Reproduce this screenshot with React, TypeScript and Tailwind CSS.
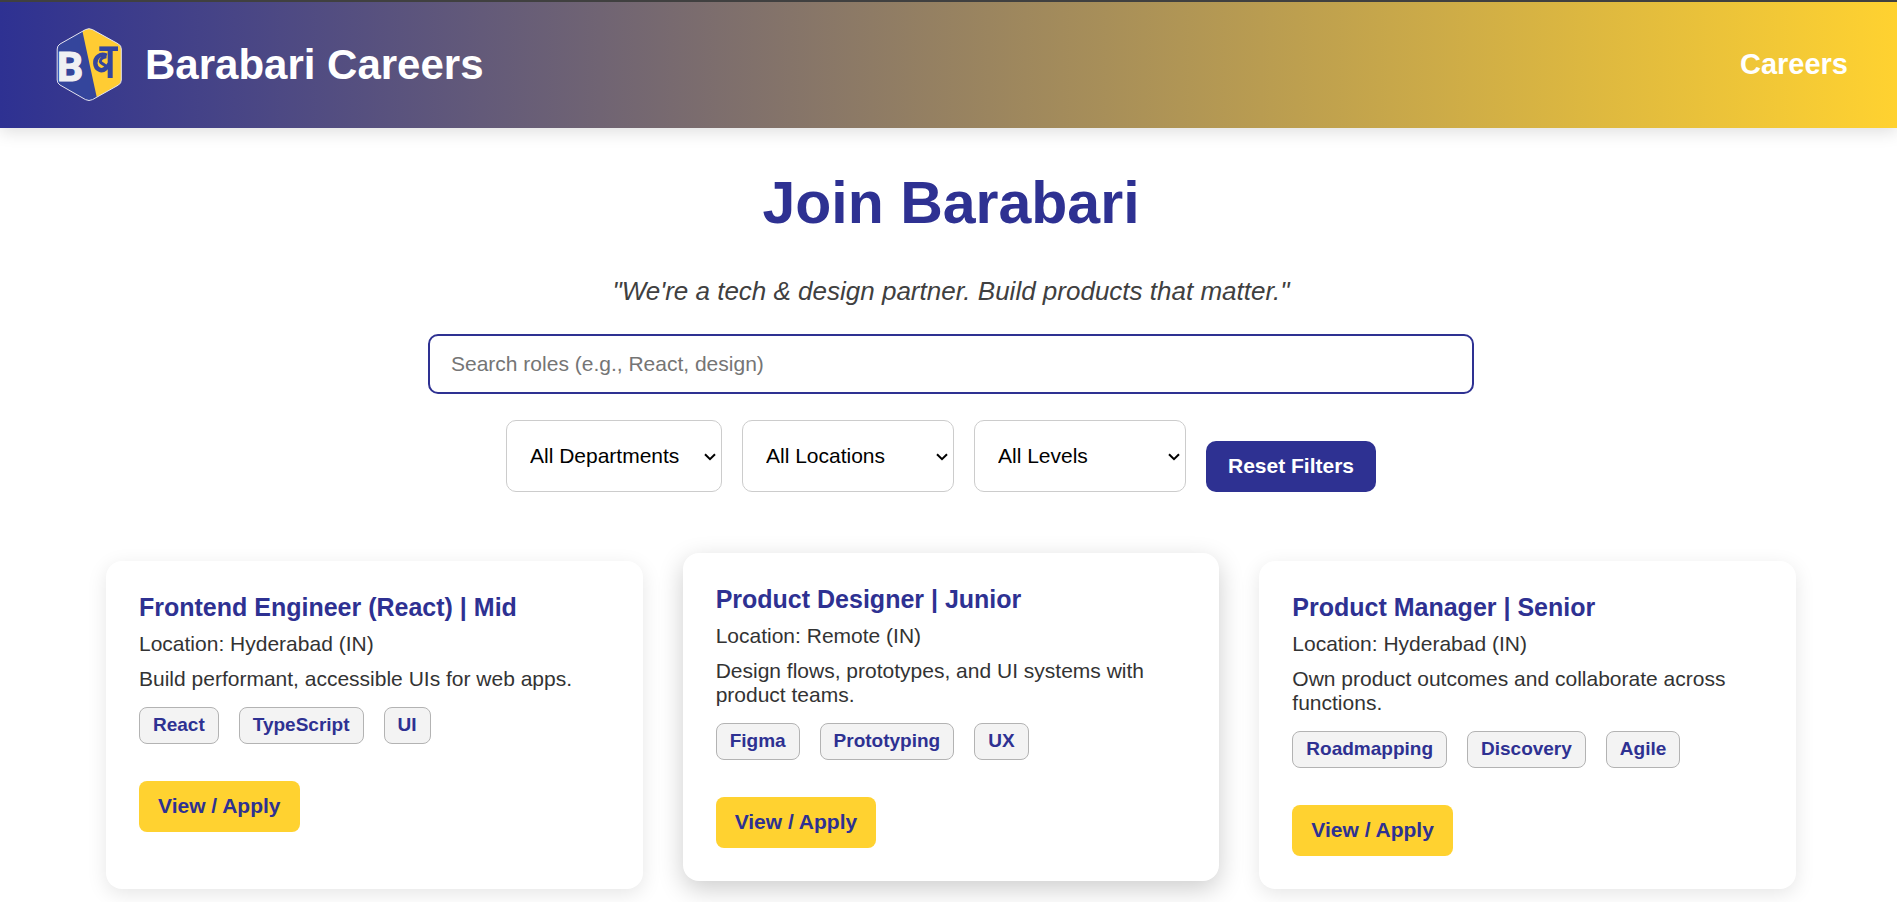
import React from "react";

type Job = {
  title: string;
  level: string;
  location: string;
  summary: string;
  tags: string[];
  raised?: boolean;
};

const jobs: Job[] = [
  {
    title: "Frontend Engineer (React)",
    level: "Mid",
    location: "Hyderabad (IN)",
    summary: "Build performant, accessible UIs for web apps.",
    tags: ["React", "TypeScript", "UI"],
  },
  {
    title: "Product Designer",
    level: "Junior",
    location: "Remote (IN)",
    summary: "Design flows, prototypes, and UI systems with product teams.",
    tags: ["Figma", "Prototyping", "UX"],
    raised: true,
  },
  {
    title: "Product Manager",
    level: "Senior",
    location: "Hyderabad (IN)",
    summary: "Own product outcomes and collaborate across functions.",
    tags: ["Roadmapping", "Discovery", "Agile"],
  },
];

const filters = [
  {
    label: "Department",
    all: "All Departments",
    options: ["Engineering", "Design", "Product"],
    width: "w-[216px]",
  },
  { label: "Location", all: "All Locations", options: ["Hyderabad", "Remote"], width: "w-[212px]" },
  { label: "Level", all: "All Levels", options: ["Junior", "Mid", "Senior"], width: "w-[212px]" },
];

const hexagon =
  "M45.5 14.6 Q49 12.8 52.5 14.6 L78.5 29 Q81.3 30.7 81.3 34 L81.3 65 Q81.3 68.2 78.5 70 L52.5 84.6 Q49 86.4 45.5 84.6 L20 70 Q17.2 68.2 17.2 65 L17.2 34 Q17.2 30.7 20 29 Z";

function Logo() {
  return (
    <svg viewBox="16 12 67 75" className="h-[75px] w-[67px]" role="img" aria-label="Barabari">
      <clipPath id="logo-hexagon">
        <path d={hexagon} />
      </clipPath>
      <g clipPath="url(#logo-hexagon)">
        <rect x="16" y="12" width="67" height="76" fill="#34459c" />
        <path d="M41.5 12 L58 88 L84 88 L84 12 Z" fill="#ffcc33" />
      </g>
      <path d={hexagon} fill="none" stroke="#e4e4f0" strokeWidth="1" />
      <text
        x="17"
        y="66"
        fontSize="41"
        fontWeight="700"
        fontFamily="Roboto, Arial, sans-serif"
        fill="#f0f0f3"
        stroke="#f0f0f3"
        strokeWidth="1.2"
      >
        B
      </text>
      <g fill="none" stroke="#34459c">
        <path d="M59.3 33.7 H78" strokeWidth="4.6" />
        <path d="M70.2 34 V63" strokeWidth="5" />
        <path
          d="M66.500 40.800 C60.500 37.500 54.800 42.500 55.300 48.500 C55.800 54.500 61.500 57 65.500 53.500 C67.500 52 68.500 50.500 69.500 49"
          strokeWidth="4.4"
        />
        <path d="M66.5 41.8 C63 42 60 44.300 60.300 46.500 C61 49 64 48.500 66 51.500" strokeWidth="3" />
      </g>
    </svg>
  );
}

function JobCard({ job }: { job: Job }) {
  return (
    <article
      className={
        job.raised
          ? "flex min-h-[328px] -translate-y-2 flex-col items-start rounded-2xl bg-white px-[33px] pt-8 pb-[33px] shadow-[0_8px_26px_rgba(0,0,0,0.2)]"
          : "flex min-h-[328px] flex-col items-start rounded-2xl bg-white px-[33px] pt-8 pb-[33px] shadow-[0_5px_20px_rgba(0,0,0,0.1)]"
      }
    >
      <h2 className="text-[25px] leading-7 font-bold text-[#2e3192]">
        {job.title} | {job.level}
      </h2>
      <p className="mt-[11px] text-[21px] leading-6 text-[#333]">Location: {job.location}</p>
      <p className="mt-[11px] text-[21px] leading-6 text-[#333]">{job.summary}</p>
      <ul className="mt-4 flex flex-wrap gap-5">
        {job.tags.map((tag) => (
          <li
            key={tag}
            className="rounded-lg border border-[#b3b3b3] bg-[#f3f3f3] px-[13px] pt-1.5 pb-2 text-[19px] leading-[21px] font-bold text-[#2e3192]"
          >
            {tag}
          </li>
        ))}
      </ul>
      <a
        href="#apply"
        className="mt-[37px] rounded-lg bg-[#ffd230] px-[19px] pt-3 pb-3.5 text-[21px] leading-[25px] font-bold text-[#2e3192]"
      >
        View / Apply
      </a>
    </article>
  );
}

export default function App() {
  return (
    <div className="bg-white font-['Liberation_Sans',Arial,sans-serif]">
      <header className="flex items-center justify-between border-t-2 border-[#404040] bg-linear-to-r/srgb from-[#2e3192] to-[#ffd230] pr-[49px] pl-14 shadow-[0_4px_16px_rgba(0,0,0,0.13)]">
        <div className="flex items-center gap-[22px] pt-[25px] pb-[26px]">
          <Logo />
          <span className="text-[42px] leading-[48px] font-bold text-white">Barabari Careers</span>
        </div>
        <nav className="pb-0.5">
          <a href="#careers" className="text-[29px] leading-8 font-bold text-white">
            Careers
          </a>
        </nav>
      </header>

      <main className="flex flex-col items-center pt-[41px] pr-[101px] pb-8 pl-[106px]">
        <h1 className="text-[59px] leading-[68px] font-bold text-[#2e3192]">Join Barabari</h1>
        <p className="mt-[39px] text-[26px] leading-[30px] text-[#404040] italic">
          "We're a tech &amp; design partner. Build products that matter."
        </p>

        <input
          type="search"
          aria-label="Search roles"
          placeholder="Search roles (e.g., React, design)"
          className="mt-7 h-[60px] w-full max-w-[1046px] rounded-[10px] border-2 border-[#2e3192] bg-white px-[21px] text-[21px] text-black outline-none placeholder:text-[#757575]"
        />

        <div className="mt-[26px] flex flex-wrap items-end justify-center">
          {filters.map((filter) => (
            <div key={filter.label} className={`relative mr-5 ${filter.width}`}>
              <select
                aria-label={filter.label}
                className="h-[72px] w-full appearance-none rounded-[10px] border border-[#ccc] bg-white pr-6 pl-[23px] text-[21px] text-black"
              >
                <option>{filter.all}</option>
                {filter.options.map((option) => (
                  <option key={option}>{option}</option>
                ))}
              </select>
              <svg
                viewBox="0 0 12 8"
                className="pointer-events-none absolute top-[33px] right-1.5 h-2 w-3"
                fill="none"
                stroke="#000"
                strokeWidth="2"
                aria-hidden="true"
              >
                <path d="M1 1.200 L6 6.200 L11 1.200" />
              </svg>
            </div>
          ))}
          <button
            type="button"
            className="mr-5 rounded-[10px] bg-[#2e3192] px-[22px] pt-3 pb-3.5 text-[21px] leading-[25px] font-bold text-white"
          >
            Reset Filters
          </button>
        </div>

        <section aria-label="Open roles" className="mt-[69px] grid w-full grid-cols-3 gap-10">
          {jobs.map((job) => (
            <JobCard key={job.title} job={job} />
          ))}
        </section>
      </main>
    </div>
  );
}
